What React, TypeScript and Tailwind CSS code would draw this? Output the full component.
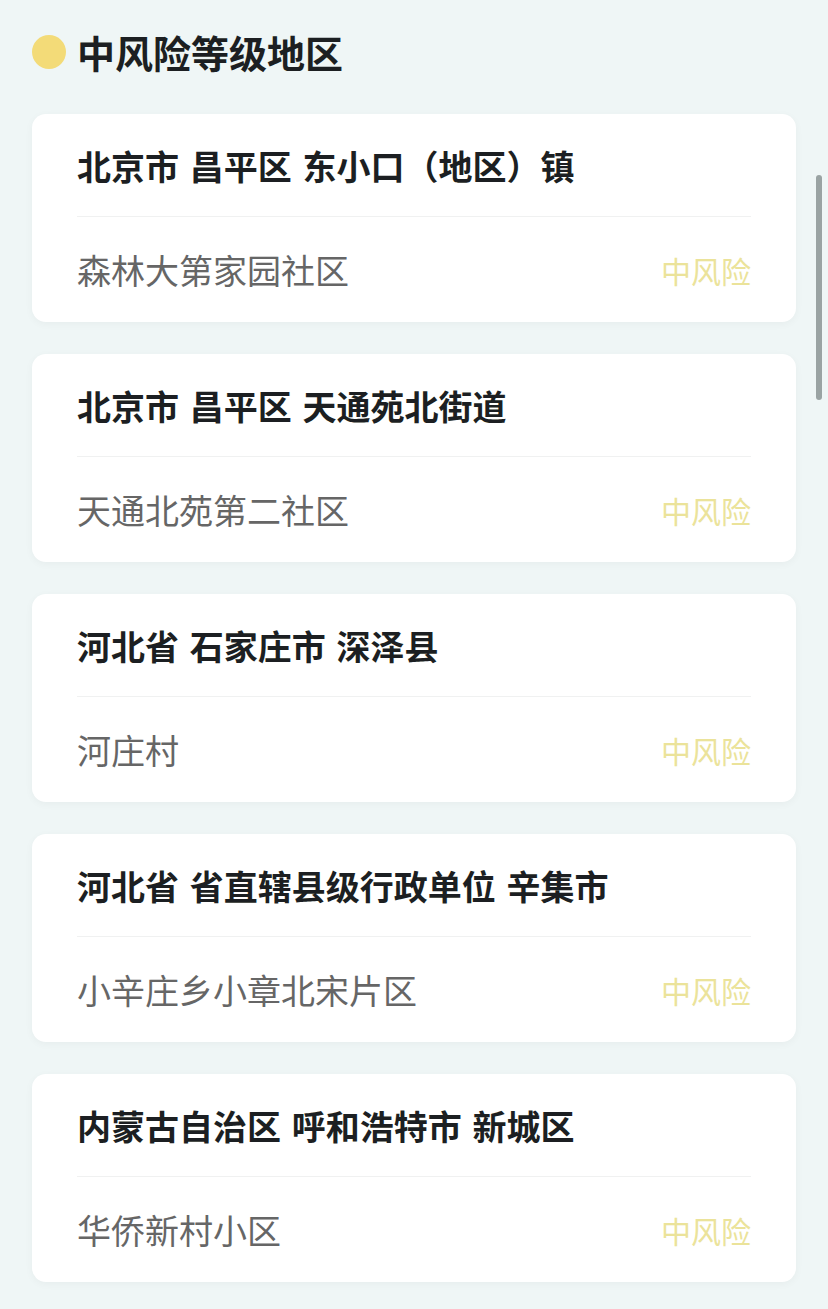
// App.tsx — 中风险等级地区 list

type Area = {
  region: string;
  place: string;
};

const areas: Area[] = [
  { region: '北京市 昌平区 东小口（地区）镇', place: '森林大第家园社区' },
  { region: '北京市 昌平区 天通苑北街道', place: '天通北苑第二社区' },
  { region: '河北省 石家庄市 深泽县', place: '河庄村' },
  { region: '河北省 省直辖县级行政单位 辛集市', place: '小辛庄乡小章北宋片区' },
  { region: '内蒙古自治区 呼和浩特市 新城区', place: '华侨新村小区' },
];

const font = { fontFamily: '"Noto Sans CJK SC", "Noto Sans", sans-serif' };

export default function App() {
  return (
    <div className="relative h-[1309px] w-[828px] overflow-hidden bg-[#eff6f6]" style={font}>
      {/* 标题 */}
      <div className="flex h-[114px] items-start px-[32px] pt-[34px]">
        <div className="flex items-center gap-[11px]">
          <span className="h-[34px] w-[34px] rounded-full bg-[#f3db78]" />
          <h2 className="text-[38px] font-bold leading-[36px] text-[#1c1f22]">中风险等级地区</h2>
        </div>
      </div>

      {/* 列表 */}
      <div className="flex flex-col gap-[32px] px-[32px]">
        {areas.map((a, i) => (
          <article
            key={i}
            className="rounded-[14px] bg-white px-[45px] shadow-[0_2px_8px_rgba(0,0,0,0.04)]"
          >
            <div className="flex h-[103px] items-center border-b border-[#f0f1f1] pt-[1px]">
              <h3 className="text-[34px] font-bold leading-none text-[#1c1f22] [word-spacing:3px]">
                {a.region}
              </h3>
            </div>
            <div className="flex h-[105px] items-center justify-between pt-[1px]">
              <p className="text-[34px] leading-none text-[#666666]">{a.place}</p>
              <span className="text-[30px] leading-none text-[#ebe39a]">中风险</span>
            </div>
          </article>
        ))}
      </div>

      {/* 滚动条 */}
      <div className="absolute left-[816px] top-[175px] h-[225px] w-[6px] rounded-full bg-[#9aa3a3]" />
    </div>
  );
}
